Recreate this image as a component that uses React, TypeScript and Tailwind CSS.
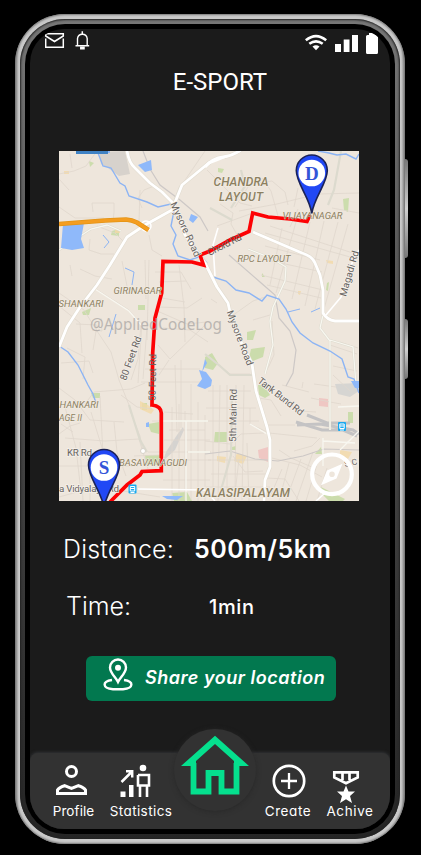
import React from "react";

const minorRoads = [
  "M59 174 74 171 86 166 97 151M93 212 92 203H114V212L113 222M90 239 89 250 101 254H114M140 190 139 222M154 186 144 190 138 198 142 208",
  "M59 207 75 218 104 218M149 235 152 250 162 256M97 226 115 233 123 241M70 154 72 168M59 179 69 190",
  "M181 186 205 151M207 170 240 203 252 206M220 204 233 213 231 224 240 240M217 226 250 214",
  "M235 207 250 184 272 181 285 192 288 205M239 211 277 204 318 194 359 193M262 178 271 191 278 216M298 188 294 207M332 208 359 213",
  "M270 226 359 255M265 233 350 257M282 228 270 285M296 222 276 293M310 222 292 299M324 221 305 306M338 222 315 309M348 224 322 316",
  "M265 246 320 260M267 260 322 272M261 275 323 290M267 285 321 298M298 209 290 227",
  "M96 289 129 310 141 324 138 359 131 380M59 293 84 310 95 328 111 352 119 380 129 405",
  "M80 269 95 276 112 279M70 265 72 276M122 261 127 286M145 260 146 299M149 260 147 340M155 272H181L191 289M159 282 186 281M158 307 187 308 202 298",
  "M59 306 80 323 82 353M76 324 97 325 93 350M67 348 85 357 83 379M92 330 102 331 101 318M61 363 89 361 93 373",
  "M142 322 138 383M147 327 143 379M155 310 187 324 206 322M163 328 190 330 208 342M162 298 185 302M179 265 184 307 185 342",
  "M145 369H200M141 382 205 382M169 360 159 375M158 345 170 359 205 325M175 365 177 432M181 360 181 428",
  "M206 354 230 374H250M211 299 217 303M229 318 253 301 265 297M253 320 270 315M272 321 274 355 269 366 265 373",
  "M59 388 75 400 90 420 124 422M65 438 105 441 139 439M59 466 138 466M64 403 76 448 81 492M91 412 103 451 104 462",
  "M85 404 94 392 131 389 145 383M100 396 103 455M114 422 117 452 126 476M130 411 140 436 143 451M121 395 137 407 152 409",
  "M139 439 148 469M134 456 160 455M148 452H211M152 421H206M164 412 193 414M169 430H205M164 440H210M163 460H211",
  "M172 407V501M179 404V501M185 411V500M191 384V500M198 402V501M205 415V501M163 480H210M117 490 160 497",
  "M208 391H251M206 408H256M206 421H259M205 441 230 444M208 460H269M211 474H268M206 487H270",
  "M213 385V501M220 385 218 501M227 385V495M236 385 235 501M244 385 242 500M250 408V424L267 432",
  "M230 445 241 434 264 433M233 456 245 472 263 471M239 459 235 493M247 443 249 501",
  "M266 425H295M269 433 317 438M272 458 300 465 322 477M267 478 285 479 299 501M282 469 270 497M289 463 279 501",
  "M301 459 286 500M313 452 296 501M318 461 306 501M327 468 317 501M279 450 291 458 314 468",
  "M258 398 271 400 281 416M314 384 336 387M311 398 330 402 341 404M287 402 300 411 316 412M320 438 312 446 294 451",
  "M59 434 70 426 80 423M59 497 88 489 101 493M61 424 73 432M80 442 83 501M90 454 90 501",
  "M330 345 357 354M340 342 358 348M333 366 357 371M333 375 350 391M282 385 309 392M303 382 302 388",
];

function MapView() {
  return (
    <svg viewBox="59 151 300 350" className="block h-[350px] w-[300px]">
      <rect x="59" y="151" width="300" height="350" fill="#eee6dc" />
      {/* parks and built-up blocks */}
      <path d="M99 152 125 151 130 174 119 176 108 168 101 164Z" fill="#d7d2cc" />
      <path d="M335 384 359 383V391L350 397 338 394Z" fill="#d6d5d2" />
      <g fill="#c6dba4" opacity=".85">
        <path d="M112 231 119 229V236L111 235ZM89 161 94 163 90 167ZM343 199 349 198 348 212 344 210ZM218 168 224 169 222 173 218 172ZM138 305 145 305V310H138Z" />
        <path d="M205 357 212 353 218 363 213 370 205 368ZM251 349 265 347 263 357 253 361 249 358ZM247 332 256 330 253 340H247ZM145 455H162V465H146ZM148 424 159 422 159 434 151 432Z" />
        <path d="M258 385 264 385 270 395 265 398 259 395ZM215 432H227V442H214ZM348 412H353V423H348ZM321 487 345 499 343 501H329L318 490ZM91 393 100 393V398L93 398ZM142 403 147 403V410H142Z" />
        <path d="M172 493 187 492 192 501H174ZM82 312 91 308 89 315H83ZM321 447 322 454 315 454ZM232 447 236 446 236 450H232ZM262 273 265 277H262ZM327 283 329 282 328 291 326 290Z" />
      </g>
      <g fill="#f3d9a8" opacity=".8">
        <path d="M115 229H120V233H115ZM237 453 247 456 243 464 234 461ZM217 456 226 457 225 463 217 461ZM340 450 352 452 348 459 340 456ZM140 401 148 405 154 410 151 414 140 409ZM298 291 301 291 300 295 298 294ZM326 260 333 261 333 264 327 263ZM64 171H69V174H64Z" />
      </g>
      <path d="M258 450 268 447V462L259 458ZM319 398 328 399 328 407 319 406Z" fill="#efc7c3" />
      <path d="M183 427 177 435 166 452 163 461 175 450 184 430Z" fill="#d5d3d0" />
      {/* side streets */}
      <g fill="none" stroke="#dfd7cd" strokeWidth=".8">
        {minorRoads.map((d) => (
          <path key={d} d={d} />
        ))}
      </g>
      {/* railway */}
      <g fill="none" stroke="#cdc8c6" strokeWidth="1.2">
        <path d="M143 151 150 169 160 185 180 200 200 217 208 231M229 255 260 282 275 295 279 318 290 331 296 350 293 373 286 386" />
        <path d="M205 454 230 451 255 459 278 461 303 456 324 449 359 450" />
      </g>
      <path d="M296 422 322 430 343 430 357 436M297 425 320 424 353 430 359 434M307 415 327 423 350 423" fill="none" stroke="#c4c3c4" strokeWidth="3" />
      {/* secondary streets */}
      <g fill="none" stroke="#dcdace" strokeWidth="2.2">
        <path d="M59 250 91 229 107 225 121 231M248 249 271 258 286 267 285 281 273 307 270 321 273 345 265 374" />
        <path d="M341 151 334 190 328 205M241 170 245 186 231 208M210 208 232 220M171 210 180 187 205 166" />
        <path d="M323 315 320 328 330 341 330 430M330 340 353 347 356 385M205 354 220 366 230 375H253M232 392 231 455 221 490M129 405 140 440 147 452" />
      </g>
      <g fill="none" stroke="#f8f7f0" strokeWidth="1.3">
        <path d="M59 250 91 229 107 225 121 231M248 249 271 258 286 267 285 281 273 307 270 321 273 345 265 374" />
        <path d="M323 315 320 328 330 341 330 430M330 340 353 347 356 385M186 421V501M163 421H208M95 289 129 311 142 326M210 452H188M250 424 267 434M338 407 359 406M323 438V466M323 441 355 443M359 431 340 450" />
      </g>
      {/* water */}
      <g fill="none" stroke="#8cb4f4" strokeWidth="1.4">
        <path d="M98 153 103 166 111 168 120 183 125 186 129 196 147 202 158 207 171 204 175 206 171 226 176 235 173 244 178 256 190 260 201 256 207 263" />
        <path d="M213 277 226 281 236 290 249 293 262 301 267 295 279 299 286 309 292 322 300 333 313 343 330 351 342 359 348 377 354 379 359 393" />
        <path d="M318 151 329 153 337 155 346 154 356 159 359 154M59 346 68 352 78 365 88 385 93 394 96 403" />
        <path d="M125 268 134 272 132 285M116 314 109 337M103 235 109 242 104 248M288 312 300 309M311 312 320 308" strokeWidth="1" />
      </g>
      <g fill="#8fb9fa">
        <path d="M63 224 84 223 81 239 84 248 72 250 61 248ZM138 165 151 160 152 170 145 172ZM191 214 198 217 193 223 189 220ZM103 151H110V153H101Z" />
        <path d="M199 370 206 372 212 380 211 386 205 389 197 386 202 379ZM205 359 207 363 202 372ZM162 496 183 496 177 500 167 499ZM146 423 149 422V427H146ZM351 381 355 388 359 388V381Z" />
      </g>
      <path d="M76 151H108V154H76Z" fill="#3f82c4" />
      {/* main roads */}
      {[
        { color: "#e3ddd1", width: 4 },
        { color: "#ffffff", width: 2.8 },
      ].map((line) => (
        <g key={line.color} fill="none" stroke={line.color} strokeWidth={line.width} strokeLinejoin="round">
          <path d="M127 151Q129 163 135 168L150 183 162 192 173 203 185 235 205 263 217 287 228 303 230 312 240 340 252 364 256 391 267 427 270 440V467L265 480 264 501" />
          <path d="M210 162 182 185 172 210 145 225 127 237 110 265 97 285 80 307 67 327 59 347" />
          <path d="M205 167Q213 158 223 157T242 149M253 232 302 253Q312 256 315 263L320 275 323 290V313Q327 320 335 321H359" />
        </g>
      ))}
      <path d="M208 164 241 151M215 276 213 245 218 228M326 315 341 297 351 265 359 250M138 489 205 490 215 501M316 501 325 493" fill="none" stroke="#fff" strokeWidth="1.600" />
      <circle cx="146" cy="226" r="5" fill="none" stroke="#fff" strokeWidth="1.5" />
      <circle cx="143" cy="451" r="2.5" fill="#fff" stroke="#d6d2c8" />
      <path d="M59 224 105 220.5 126 219.5Q132 220 137 222.5L148.500 230" fill="none" stroke="#e39416" strokeWidth="4.600" />
      <path d="M59 224 105 220.5 126 219.5Q132 220 137 222.5L148.500 230" fill="none" stroke="#f49d20" strokeWidth="3.200" />
      {/* travelled route */}
      <path d="M310 215 307 221.500 290 219 268 217 252.700 213 249 231.500 230 240 210 251 200 255 203.500 265 192 262 163 261.500 161.700 293 155 318 152.700 353 152 405Q161 406 161.300 413V470.700L142 471.500 140 475 127 485 110 502" fill="none" stroke="#fd0204" strokeWidth="3.700" />
      {/* labels */}
      <g fontFamily="Roboto, sans-serif" fill="#8c8060" stroke="#f2ece4" strokeWidth="1.5" paintOrder="stroke" fontStyle="italic">
        <g fontSize="12" fontWeight="500">
          <text x="213.500" y="186" textLength="55">CHANDRA</text>
          <text x="219" y="200.500" textLength="44">LAYOUT</text>
          <text x="196" y="497" textLength="94">KALASIPALAYAM</text>
        </g>
        <g fontSize="9.500" strokeWidth="1">
          <text x="113.500" y="293.500" textLength="48">GIRINAGAR</text>
          <text x="58.500" y="307" textLength="45">SHANKARI</text>
          <text x="237.500" y="262" textLength="53">RPC LAYOUT</text>
          <text x="59.500" y="408" textLength="39">HANKARI</text>
          <text x="59" y="420.500" textLength="23" lengthAdjust="spacingAndGlyphs">AGE II</text>
          <text x="119" y="465.500" textLength="68">BASAVANAGUDI</text>
        </g>
        <text x="282.500" y="218.500" fontSize="9.500" strokeWidth=".3" textLength="60">VIJAYANAGAR</text>
      </g>
      <g fontFamily="Roboto, sans-serif" fontSize="9.800" fill="#66635f" stroke="#f5f0ea" strokeWidth="1.4" paintOrder="stroke">
        <text transform="translate(170 204) rotate(65)" textLength="59">Mysore Road</text>
        <text transform="translate(226.500 312) rotate(69)" textLength="58">Mysore Road</text>
        <text transform="translate(209.500 256) rotate(-27)" strokeWidth="0" textLength="37">Chord Rd</text>
        <text transform="translate(346 297) rotate(-74)" textLength="47">Magadi Rd</text>
        <text transform="translate(126 381) rotate(-70)" textLength="46">80 Feet Rd</text>
        <text transform="translate(155.500 401) rotate(-89)" strokeWidth="0" textLength="47">50 Feet Rd</text>
        <text transform="translate(236 442) rotate(-89)" textLength="53">5th Main Rd</text>
        <text transform="translate(257 382) rotate(38)" textLength="55">Tank Bund Rd</text>
        <text x="67" y="456" textLength="25">KR Rd</text>
        <text x="59" y="492" textLength="60">a Vidyalaya Rd</text>
        <text transform="translate(345 467) rotate(-12)" fontSize="8.500" textLength="13">S C</text>
      </g>
      <text x="90" y="330" fontFamily="Noto Sans, sans-serif" fontSize="15.500" fill="#aaa6a4" opacity=".75" textLength="132" lengthAdjust="spacingAndGlyphs">@AppliedCodeLog</text>
      {/* stations */}
      {[
        [132.500, 488.500],
        [342, 426],
      ].map(([x, y]) => (
        <g key={x} transform={`translate(${x} ${y})`}>
          <rect x="-4" y="-4" width="8" height="9" rx="1" fill="#18a9ef" />
          <path d="M-2.200-2H2.200V2.500H-2.200ZM-2.200 0H2.200M-2 4 2 4" fill="none" stroke="#fff" strokeWidth="1" />
        </g>
      ))}
      {/* pins */}
      {[
        { x: 311.800, y: 170.5, letter: "D" },
        { x: 104, y: 465, letter: "S" },
      ].map((pin) => (
        <g key={pin.letter} transform={`translate(${pin.x} ${pin.y})`}>
          <path d="M0 43C-2 27-15.500 13-15.500 0A15.500 15.500 0 0 1 15.500 0C15.500 13 2 27 0 43Z" fill="#2148f5" stroke="#1b2258" strokeWidth="1.600" />
          <circle cy="2.500" r="13.300" fill="#fff" />
          <text y="9" textAnchor="middle" fontFamily="Liberation Serif, serif" fontWeight="700" fontSize="19" fill="#3355d8">
            {pin.letter}
          </text>
        </g>
      ))}
      {/* compass */}
      <g transform="translate(332 474.300)">
        <circle r="19.800" fill="none" stroke="#fff" strokeWidth="4.200" />
        <path fillRule="evenodd" d="M10.500-10.500-5-3.800-11 11 5-3.800 4.800 4.200-11 11-5-3.800ZM10.500-10.500 4.800 4.200-11 11-5-3.800ZM0-2.800A2.800 2.800 0 1 1 0 2.800 2.800 2.800 0 0 1 0-2.800Z" fill="none" />
        <path fillRule="evenodd" d="M10.500-10.500 4.500 4.200-11 11-5-3.800ZM0-2.800A2.800 2.800 0 1 0 0 2.800 2.800 2.800 0 0 0 0-2.800Z" fill="#fff" />
      </g>
    </svg>
  );
}

function StatusBar() {
  return (
    <div className="flex h-7 justify-between pt-0.5 pr-3 pl-[15px] text-white">
      <div className="flex gap-[10px]">
        <svg viewBox="0 0 20 18" className="h-[18px] w-5" fill="none" stroke="currentColor" strokeWidth="1.500">
          <path d="M.7 3.500V5L9.500 10.500 18.300 5V2.700H.7ZM.7 7.500V16.300H18.300V7.500" />
        </svg>
        <svg viewBox="0 0 15 19" className="h-[19px] w-[15px]" fill="none" stroke="currentColor" strokeWidth="1.400">
          <path d="M.5 14.800H14.200M2.500 14.500V7.500A4.900 4.900 0 0 1 12.200 7.500V14.500" />
          <path d="M7.300.3V3M5.800 16.200H9V17.800H5.800Z" strokeWidth="1.500" />
        </svg>
      </div>
      <div className="flex">
        <svg viewBox="0 0 22 21" className="h-[21px] w-[22px]" fill="none" stroke="currentColor" strokeWidth="2.600">
          <path d="M.8 9.300Q11 .8 21.200 9.300M4.300 12.800Q11 7.800 17.700 12.800" />
          <path d="M7.500 15.500Q11 13.200 14.500 15.500L11 19.300Z" fill="currentColor" stroke="none" />
        </svg>
        <svg viewBox="0 0 23 21" className="ml-2 h-[21px] w-[23px]" fill="currentColor">
          <path d="M0 13H6V21H0ZM8.700 8.500H14.500V21H8.700ZM17 4H23V21H17Z" />
        </svg>
        <svg viewBox="0 0 12 23" className="ml-2 h-[23px] w-3" fill="currentColor">
          <path d="M3 2H9V4H10.500Q12 4 12 5.500V21.500Q12 23 10.500 23H1.500Q0 23 0 21.500V5.500Q0 4 1.500 4H3Z" />
        </svg>
      </div>
    </div>
  );
}

function NavItem({ label, className, children }: { label: string; className: string; children: React.ReactNode }) {
  return (
    <div className={`flex flex-col items-center whitespace-nowrap text-white ${className}`}>
      <svg viewBox="0 0 36 36" className="h-9 w-9 shrink-0 overflow-visible" fill="none" stroke="currentColor" strokeWidth="3">
        {children}
      </svg>
      <span className="mt-[5px] text-[13.5px] leading-4">{label}</span>
    </div>
  );
}

function BottomNav() {
  return (
    <div className="relative mt-auto flex h-[76px] rounded-t-[8px] bg-[#323232] pt-[9px] shadow-[0_-1px_3px_#303235]">
      <NavItem label="Profile" className="ml-[22px] w-[43px] tracking-[0.1px]">
        <circle cx="15.500" cy="9.500" r="5" />
        <path d="M1.500 31.500V28Q3 25.500 8.500 23.700L15.500 26.500 22.500 23.700Q28 25.500 29.500 28V31.500Z" />
      </NavItem>
      <NavItem label="Statistics" className="ml-[14px] w-[64px] tracking-[0.4px]">
        <g transform="translate(-2.500 0)">
          <circle cx="22.500" cy="6" r="3.300" fill="currentColor" stroke="none" />
          <path d="M17.500 13H28.500V23.500H26.500V35M17.500 13V23.500H19.500V35M19 23.500H28" strokeWidth="2.600" />
          <path d="M0 29.500H5V35H0ZM8.500 23H13V35H8.500Z" fill="currentColor" stroke="none" />
          <path d="M1 20 11 10M5.500 9.300H11.700V15.500" strokeWidth="2.500" />
        </g>
      </NavItem>
      <NavItem label="Create" className="ml-[91px] w-[48px] tracking-[0.6px]">
        <circle cx="19" cy="19" r="15.200" strokeWidth="2.700" />
        <path d="M11 19H27M19 11V27" strokeWidth="2.300" />
      </NavItem>
      <NavItem label="Achive" className="ml-[14px] w-[48px] tracking-[0.6px]">
        <path d="M2.300 10.300H25.700V15.500L14 21.300 2.300 15.500ZM10.500 10V18M17.500 10V18" strokeWidth="2.700" />
        <path d="M14 23.500 16.500 29.500H23L18 34 20 41 14 37.200 8 41 10 34 5 29.500H11.500Z" fill="currentColor" stroke="none" />
      </NavItem>
      <div className="absolute -top-[24px] left-[143.500px] flex h-[82px] w-[82px] justify-center rounded-full bg-[#323232] shadow-[0_1px_5px_#292929] pt-1.5">
        <svg viewBox="180.500 735 68 60" className="h-[60px] w-[68px]" fill="#05e08e">
          <path d="M214.500 735.700 248.500 766H233.500V761L214.500 744 195.500 761V766H180.500Z" />
          <path d="M193 763V791.500H208V773H221V791.500H236V763" fill="none" stroke="#05e08e" strokeWidth="5.800" />
        </svg>
      </div>
    </div>
  );
}

export default function App() {
  return (
    <main className="h-[855px] w-[421px] overflow-hidden bg-black pt-[14px] pl-[15px] font-['Inter',sans-serif] [font-feature-settings:'cv11']">
      <div className="relative h-[830px] w-[390px]">
        <div className="absolute top-[145px] -right-[3px] h-[99px] w-2 rounded-[3px] bg-gradient-to-b from-[#777] via-[#d1d1d1] to-[#777]" />
        <div className="absolute top-[305px] -right-[3px] h-[60px] w-2 rounded-[3px] bg-gradient-to-b from-[#777] via-[#d1d1d1] to-[#777]" />
        <div className="relative h-full rounded-[50px] bg-[linear-gradient(90deg,#858585,#c9c9c9_1%,#c9c9c9_99%,#858585)] p-[5px] shadow-[inset_0_0_2px_1px_#777]">
          <div className="h-full rounded-[45px] bg-gradient-to-b from-[#777] via-[#444] to-[#252525] p-[5px] shadow-[inset_0_0_2px_1px_#222]">
            <div className="h-full rounded-[40px] bg-black p-[5px]">
              <div className="flex h-full flex-col overflow-hidden rounded-[34px] bg-[#1b1b1b] text-white">
                <StatusBar />
                <h1 className="pt-2.5 pl-5 text-center font-['Roboto',sans-serif] text-2xl leading-[30px] font-normal">E-SPORT</h1>
                <div className="mt-[54px] ml-[29px]">
                  <MapView />
                </div>
                <div className="mt-[31px] flex h-9 items-center whitespace-nowrap">
                  <span className="ml-[33px] w-[131px] text-[25px] font-light tracking-[0.2px]">Distance:</span>
                  <span className="text-[25px] font-semibold tracking-[0.55px]">500m/5km</span>
                </div>
                <div className="mt-[21px] flex h-9 items-center whitespace-nowrap">
                  <span className="ml-9 w-[143px] text-[25px] font-light">Time:</span>
                  <span className="text-[20px] font-medium tracking-[0.6px]">1min</span>
                </div>
                <button className="mt-[31px] ml-14 flex h-[45px] w-[250px] items-center rounded-md bg-[#02784f] pl-[17px] whitespace-nowrap">
                  <svg viewBox="0 0 30 33" className="-mt-2 h-[33px] w-[30px] shrink-0" fill="none" stroke="white" strokeWidth="2.400">
                    <path d="M15 24C12.500 19 7 15 7 9.500A8 8 0 0 1 23 9.500C23 15 17.500 19 15 24Z" />
                    <circle cx="15" cy="9.800" r="3" fill="white" stroke="none" />
                    <path d="M9 22C-1 23.500-1 30 10 31.200H20C31 30 31 23.500 21 22" />
                  </svg>
                  <span className="-mt-[3px] ml-[12px] text-[18px] font-semibold tracking-[0.53px] italic">Share your location</span>
                </button>
                <BottomNav />
              </div>
            </div>
          </div>
        </div>
      </div>
    </main>
  );
}
